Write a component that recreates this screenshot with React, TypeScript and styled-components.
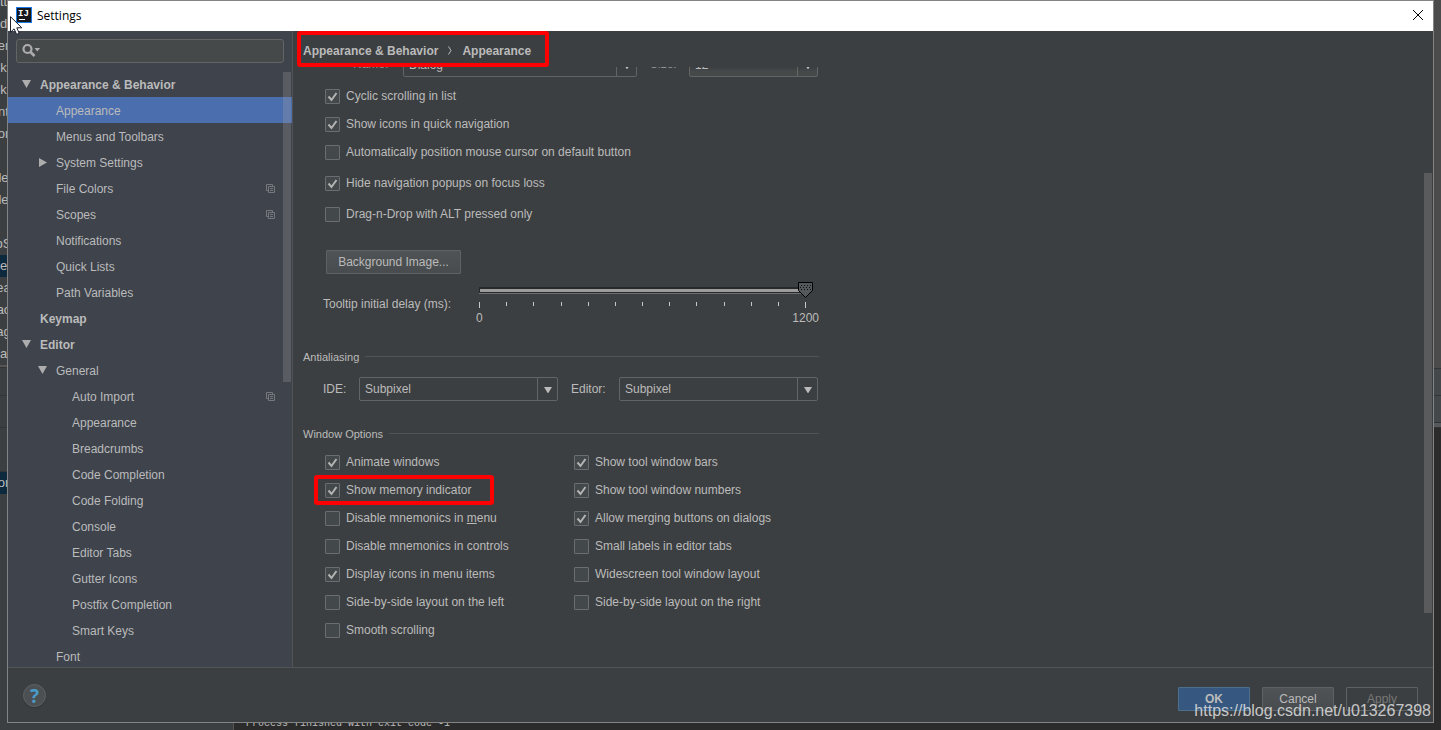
import React, { useId, useState } from "react";
import styled, { createGlobalStyle, css } from "styled-components";

const color = {
  panel: "#3c3f41",
  sidebar: "#3e434c",
  text: "#bbbbbb",
  line: "#515355",
  border: "#646464",
  selection: "#4b6eaf",
  console: "#2b2b2b",
  highlight: "#ff0000",
};

const GlobalStyle = createGlobalStyle`
  * { box-sizing: border-box; }
  body {
    margin: 0;
    background: ${color.panel};
    color: ${color.text};
    font: 12px/16px "Liberation Sans", Arial, sans-serif;
  }
  button, input, select { font: inherit; color: inherit; }
`;

/* ---------- IDE window behind the dialog ---------- */

const Desktop = styled.div`
  position: relative;
  display: grid;
  grid-template: minmax(0, 1fr) 7px / 7px minmax(0, 1fr) 7px;
  height: 100vh;
  overflow: hidden;
`;

const LeftEdge = styled.div`
  overflow: hidden;
  background: ${color.panel};
`;

const EdgeLines = styled.div`
  margin-top: -9px;
`;

const EdgeLine = styled.div<{ $selected?: boolean }>`
  display: flex;
  justify-content: center;
  height: 22px;
  line-height: 22px;
  font-size: 13px;
  white-space: pre;
  background: ${(p) => (p.$selected ? "#0d293e" : "transparent")};
`;

const EdgeBand = styled.div<{ $height: number; $fill?: string }>`
  height: ${(p) => p.$height}px;
  background: ${(p) => p.$fill ?? "transparent"};
  border-bottom: 1px solid #323435;
`;

const RightEdge = styled.div`
  display: flex;
  flex-direction: column;
  background: ${color.console};
`;

const BottomEdge = styled.div`
  grid-column: 1 / -1;
  display: flex;
  overflow: hidden;
`;

const BottomLeft = styled.div`
  width: 234px;
  border-right: 1px solid #555555;
`;

const ConsoleLine = styled.div`
  flex: 1;
  padding-left: 12px;
  margin-top: -5px;
  background: ${color.console};
  font: 10px/12px "Liberation Mono", monospace;
  white-space: pre;
`;

/* ---------- Dialog frame ---------- */

const Dialog = styled.main`
  display: flex;
  flex-direction: column;
  min-width: 0;
  border: 1px solid #848484;
  background: ${color.panel};
`;

const TitleBar = styled.header`
  display: flex;
  align-items: center;
  flex: none;
  gap: 5px;
  height: 30px;
  padding: 0 10px 2px 8px;
  background: #ffffff;
  color: #000000;
`;

const Title = styled.h1`
  flex: 1;
  margin: 0;
  padding-top: 2px;
  font: 12px/16px "Open Sans", "Noto Sans", sans-serif;
`;

const CloseButton = styled.button`
  display: flex;
  padding: 0;
  border: 0;
  background: none;
`;

const Body = styled.div`
  display: flex;
  flex: 1;
  min-height: 0;
`;

const Footer = styled.footer`
  display: flex;
  align-items: center;
  flex: none;
  gap: 12px;
  height: 55px;
  padding: 8px 15px 0;
  border-top: 1px solid ${color.line};
`;

const HelpButton = styled.button`
  width: 23px;
  height: 23px;
  margin: -7px auto 0 0;
  padding: 0;
  border: 1px solid #5f6365;
  border-radius: 50%;
  background: #4c5052;
  box-shadow: 0 1px 1px #353739;
  color: #4a9cc8;
  font: bold 19px/20px "Open Sans", sans-serif;
`;

const Button = styled.button<{ $kind?: "primary" }>`
  height: 24px;
  padding: 0 10px;
  border: 1px solid #5e6264;
  border-radius: 1px;
  background: linear-gradient(#4f5355, #484c4e);
  font-size: 12px;
  &:disabled {
    background: none;
    color: #777777;
  }
  ${(p) =>
    p.$kind === "primary" &&
    css`
      border-color: #4c708c;
      background: #365880;
      font-weight: bold;
    `}
`;

const DialogButton = styled(Button)`
  width: 72px;
`;

/* ---------- Sidebar ---------- */

const Sidebar = styled.nav`
  display: flex;
  flex-direction: column;
  flex: none;
  width: 285px;
  border-right: 1px solid ${color.line};
  background: ${color.sidebar};
`;

const SearchBox = styled.label`
  display: flex;
  align-items: center;
  flex: none;
  height: 24px;
  margin: 8px;
  padding: 0 0 2px 5px;
  border: 1px solid ${color.border};
  border-radius: 3px;
  background: #45494a;
`;

const SearchInput = styled.input`
  flex: 1;
  min-width: 0;
  border: 0;
  outline: 0;
  background: none;
`;

const TreeArea = styled.div`
  position: relative;
  flex: 1;
  min-height: 0;
  overflow: hidden;
`;

const Tree = styled.ul`
  margin: 0;
  padding: 0;
  list-style: none;
`;

const TreeRow = styled.button<{ $level: number; $selected: boolean }>`
  display: flex;
  align-items: center;
  width: 100%;
  height: 26px;
  padding: 2px 17px 0 ${(p) => 14 + p.$level * 16}px;
  border: 0;
  background: ${(p) => (p.$selected ? color.selection : "transparent")};
  font-weight: ${(p) => (p.$level === 0 ? "bold" : "normal")};
  font-size: 12px;
  text-align: left;
`;

const TreeArrow = styled.span`
  display: flex;
  width: 18px;
  margin-top: -2px;
`;

const TreeText = styled.span`
  flex: 1;
`;

const TreeBadge = styled.span`
  display: flex;
  margin-top: -2px;
`;

const TreeThumb = styled.div`
  position: absolute;
  top: 1px;
  right: 1px;
  width: 8px;
  height: 52%;
  background: rgba(160, 160, 160, 0.28);
`;

/* ---------- Settings page ---------- */

const Page = styled.section`
  display: flex;
  flex-direction: column;
  flex: 1;
  min-width: 0;
`;

const Crumbs = styled.h2`
  display: flex;
  align-items: center;
  align-self: flex-start;
  flex: none;
  gap: 10px;
  height: 36px;
  margin: 0 0 0 4px;
  padding: 3px 14px 0 2px;
  border: 4px solid ${color.highlight};
  border-radius: 3px;
  font: bold 12px/16px "Liberation Sans", Arial, sans-serif;
`;

const Scroller = styled.div`
  position: relative;
  flex: 1;
  min-height: 0;
  overflow: hidden;
`;

const PageThumb = styled.div`
  position: absolute;
  top: 106px;
  right: 1px;
  width: 8px;
  height: 440px;
  background: #5a5b5c;
`;

const Form = styled.div`
  width: 526px;
  padding-left: 10px;
`;

const FontRow = styled.div`
  display: flex;
  margin: -14px 1px 5px 50px;
`;

const FieldLabel = styled.label<{ $width: number }>`
  width: ${(p) => p.$width}px;
  line-height: 24px;
`;

const ComboBox = styled.div<{ $width: number; $editable?: boolean }>`
  display: grid;
  grid-template-columns: minmax(0, 1fr) 20px;
  width: ${(p) => p.$width}px;
  height: 24px;
  border: 1px solid ${color.border};
  border-radius: 2px;
  background: ${(p) =>
    p.$editable ? `linear-gradient(${color.panel} 60%, #45494a 80%)` : "transparent"};
`;

const ComboSelect = styled.select`
  grid-area: 1 / 1 / 2 / 3;
  appearance: none;
  margin: 0;
  padding: 0 24px 0 5px;
  border: 0;
  outline: 0;
  background: none;
  font-size: 12px;
`;

const ComboArrow = styled.span`
  grid-area: 1 / 2;
  display: flex;
  align-items: center;
  justify-content: center;
  padding-top: 2px;
  border-left: 1px solid ${color.border};
  pointer-events: none;
`;

const FontLabel = styled(FieldLabel)`
  line-height: 22px;
  color: #909293;
`;

const CheckList = styled.div`
  flex: 1;
  padding-left: 22px;
`;

const CheckRow = styled.div<{ $tall?: boolean }>`
  position: relative;
  display: flex;
  gap: 6px;
  height: ${(p) => (p.$tall ? 31 : 28)}px;
  padding-top: 7px;
`;

const CheckBox = styled.span`
  display: grid;
  width: 15px;
  height: 15px;
`;

const CheckInput = styled.input`
  grid-area: 1 / 1;
  appearance: none;
  width: 15px;
  height: 15px;
  margin: 0;
  border: 1px solid #6b6e70;
  border-radius: 1px;
  background: #43494a;
`;

const CheckMark = styled.svg`
  grid-area: 1 / 1;
  pointer-events: none;
`;

const CheckLabel = styled.label`
  line-height: 15px;
  white-space: nowrap;
`;

const Highlight = styled.span`
  position: absolute;
  top: -1px;
  left: -11px;
  width: 180px;
  height: 30px;
  border: 4px solid ${color.highlight};
  border-radius: 3px;
  pointer-events: none;
`;

const WideButton = styled(Button)`
  display: block;
  width: 135px;
  margin: 19px 0 6px 23px;
`;

const SliderRow = styled.div`
  display: flex;
  padding-left: 20px;
`;

const SliderLabel = styled.label`
  width: 155px;
  padding-top: 16px;
`;

const Slider = styled.div`
  display: grid;
  width: 343px;
`;

const SliderDrawing = styled.svg`
  grid-area: 1 / 1;
`;

const SliderInput = styled.input`
  grid-area: 1 / 1;
  margin: 0;
  opacity: 0;
`;

const SliderScale = styled.div`
  display: flex;
  justify-content: space-between;
  padding-top: 2px;
`;

const SectionTitle = styled.h3`
  display: flex;
  align-items: center;
  gap: 6px;
  margin: 23px 0 0;
  font: 11px/16px "Liberation Sans", Arial, sans-serif;
  &::after {
    content: "";
    flex: 1;
    height: 1px;
    margin-bottom: 2px;
    background: ${color.line};
  }
`;

const ComboRow = styled.div`
  display: flex;
  padding: 12px 0 2px 20px;
`;

const Gap = styled.span`
  width: 13px;
`;

const Columns = styled.div`
  display: flex;
  padding-top: 6px;
`;

const FirstColumn = styled(CheckList)`
  flex: 0 0 249px;
`;

/* ---------- Overlays ---------- */

const Watermark = styled.div`
  position: absolute;
  right: 10px;
  bottom: 9px;
  color: rgba(225, 225, 225, 0.85);
  font: 16px/20px "Liberation Sans", Arial, sans-serif;
  pointer-events: none;
`;

const Pointer = styled.svg`
  position: absolute;
  top: 16px;
  left: 10px;
  pointer-events: none;
`;

/* ---------- Icons ---------- */

const DownArrow = () => (
  <svg width="9" height="8" viewBox="0 0 9 8" aria-hidden="true">
    <path d="M0 0h9L4.5 8z" fill="#adadad" />
  </svg>
);

const SmallArrow = () => (
  <svg width="8" height="6" viewBox="0 0 8 6" aria-hidden="true">
    <path d="M0 0h8L4 6.5z" fill="#bbbbbb" />
  </svg>
);

const RightArrow = () => (
  <svg width="9" height="9" viewBox="0 0 9 9" aria-hidden="true">
    <path d="M1 0l8 4.5L1 9z" fill="#adadad" />
  </svg>
);

const ProjectIcon = () => (
  <svg width="9" height="9" viewBox="0 0 9 9" fill="none" stroke="#75797d" aria-hidden="true">
    <path d="M2 6.5H.5v-6h6V2" />
    <path d="M2.5 2.5h6v6h-6zM4 4.5h3M4 6.5h3" />
  </svg>
);

const SearchIcon = () => (
  <svg width="19" height="15" viewBox="0 0 19 15" aria-hidden="true">
    <circle cx="5.5" cy="6" r="4" fill="none" stroke="#adadad" strokeWidth="2.2" />
    <path d="M8.5 9l4 4" stroke="#adadad" strokeWidth="2.6" />
    <path d="M12.5 5h5.6l-2.8 3.6z" fill="#adadad" />
  </svg>
);

const AppIcon = () => (
  <svg width="16" height="16" viewBox="0 0 16 16" aria-hidden="true">
    <rect width="16" height="16" fill="#1a7be8" />
    <rect x="1" y="1" width="14" height="14" fill="#16181c" />
    <text x="2" y="9" fill="#fff" fontFamily="Liberation Mono" fontWeight="bold" fontSize="9">
      IJ
    </text>
    <path d="M3 12.5h6" stroke="#fff" />
  </svg>
);

const CloseIcon = () => (
  <svg width="10" height="10" viewBox="0 0 10 10" stroke="#000" aria-hidden="true">
    <path d="M0 0l10 10M10 0L0 10" />
  </svg>
);

const CrumbIcon = () => (
  <svg width="4" height="9" viewBox="0 0 4 9" fill="none" stroke="#bbbbbb" aria-hidden="true">
    <path d="M.5 .5l2.5 4-2.5 4" />
  </svg>
);

/* ---------- Parts ---------- */

type Node = {
  text: string;
  level: number;
  arrow?: "down" | "right";
  project?: boolean;
};

const nodes: Node[] = [
  { text: "Appearance & Behavior", level: 0, arrow: "down" },
  { text: "Appearance", level: 1 },
  { text: "Menus and Toolbars", level: 1 },
  { text: "System Settings", level: 1, arrow: "right" },
  { text: "File Colors", level: 1, project: true },
  { text: "Scopes", level: 1, project: true },
  { text: "Notifications", level: 1 },
  { text: "Quick Lists", level: 1 },
  { text: "Path Variables", level: 1 },
  { text: "Keymap", level: 0 },
  { text: "Editor", level: 0, arrow: "down" },
  { text: "General", level: 1, arrow: "down" },
  { text: "Auto Import", level: 2, project: true },
  { text: "Appearance", level: 2 },
  { text: "Breadcrumbs", level: 2 },
  { text: "Code Completion", level: 2 },
  { text: "Code Folding", level: 2 },
  { text: "Console", level: 2 },
  { text: "Editor Tabs", level: 2 },
  { text: "Gutter Icons", level: 2 },
  { text: "Postfix Completion", level: 2 },
  { text: "Smart Keys", level: 2 },
  { text: "Font", level: 1 },
];

type CheckProps = {
  label: React.ReactNode;
  on?: boolean;
  tall?: boolean;
  marked?: boolean;
};

function Check({ label, on = false, tall, marked }: CheckProps) {
  const id = useId();
  const [checked, setChecked] = useState(on);
  return (
    <CheckRow $tall={tall}>
      <CheckBox>
        <CheckInput
          type="checkbox"
          id={id}
          checked={checked}
          onChange={(e) => setChecked(e.target.checked)}
        />
        {checked && (
          <CheckMark width="15" height="15" viewBox="0 0 15 15" fill="none" aria-hidden="true">
            <path d="M3.5 7.5l3 3.5 5-7" stroke="#b4b4b4" strokeWidth="2" />
          </CheckMark>
        )}
      </CheckBox>
      <CheckLabel htmlFor={id}>{label}</CheckLabel>
      {marked && <Highlight />}
    </CheckRow>
  );
}

type ComboProps = { id: string; value: string; width: number; editable?: boolean };

function Combo({ id, value, width, editable }: ComboProps) {
  return (
    <ComboBox $width={width} $editable={editable}>
      <ComboSelect id={id} defaultValue={value}>
        <option>{value}</option>
      </ComboSelect>
      <ComboArrow>
        <SmallArrow />
      </ComboArrow>
    </ComboBox>
  );
}

function DelaySlider() {
  const [value, setValue] = useState(1200);
  const x = 3 + (value / 1200) * 326;
  const ticks = Array.from({ length: 13 }, (_, i) => Math.round((i * 326) / 12) + 3);
  return (
    <div>
      <Slider>
        <SliderDrawing width="343" height="28" viewBox="0 0 343 28" aria-hidden="true">
          <rect x="3" y="7" width="328" height="6" fill="#26282a" />
          <rect x="4" y="9" width="326" height="3" fill="#9c9c9c" />
          <rect x="3" y="13" width="328" height="1" fill="#6e7072" />
          {ticks.map((t, i) => (
            <rect key={t} x={t} y="22" width="1" height={i % 12 ? 4 : 6} fill="#c8c8c8" />
          ))}
          <g transform={`translate(${x - 7} 2)`}>
            <path d="M.5 .5h14v8l-7 7-7-7z" fill="#55585a" stroke="#000" />
            <path
              d="M3 3.5h10M2 5.5h11M3 7.5h10"
              stroke="#101010"
              strokeDasharray="1 2"
            />
          </g>
        </SliderDrawing>
        <SliderInput
          type="range"
          id="delay"
          min={0}
          max={1200}
          value={value}
          onChange={(e) => setValue(Number(e.target.value))}
        />
      </Slider>
      <SliderScale>
        <span>0</span>
        <span>1200</span>
      </SliderScale>
    </div>
  );
}

const edgeText = [
  "tt", "d", "er", "k", "k", "nt", "or", "", "le", "le", "", "pS", "e", "ea", "ac", "ag", "a",
];

export default function App() {
  const [selected, setSelected] = useState(1);
  return (
    <Desktop>
      <GlobalStyle />
      <LeftEdge aria-hidden="true">
        <EdgeLines>
          {edgeText.map((t, i) => (
            <EdgeLine key={i} $selected={i === 12}>
              {t}
            </EdgeLine>
          ))}
          <EdgeBand $height={3} $fill="#555555" />
          <EdgeBand $height={28} />
          <EdgeBand $height={32} />
          <EdgeBand $height={44} />
          <EdgeLine $selected>or</EdgeLine>
        </EdgeLines>
      </LeftEdge>

      <Dialog>
        <TitleBar>
          <AppIcon />
          <Title>Settings</Title>
          <CloseButton aria-label="Close">
            <CloseIcon />
          </CloseButton>
        </TitleBar>

        <Body>
          <Sidebar>
            <SearchBox>
              <SearchIcon />
              <SearchInput type="text" aria-label="Search settings" />
            </SearchBox>
            <TreeArea>
              <Tree>
                {nodes.map((n, i) => (
                  <li key={i}>
                    <TreeRow
                      $level={n.level}
                      $selected={i === selected}
                      onClick={() => setSelected(i)}
                    >
                      <TreeArrow>
                        {n.arrow === "down" && <DownArrow />}
                        {n.arrow === "right" && <RightArrow />}
                      </TreeArrow>
                      <TreeText>{n.text}</TreeText>
                      {n.project && (
                        <TreeBadge>
                          <ProjectIcon />
                        </TreeBadge>
                      )}
                    </TreeRow>
                  </li>
                ))}
              </Tree>
              <TreeThumb />
            </TreeArea>
          </Sidebar>

          <Page>
            <Crumbs>
              <span>Appearance &amp; Behavior</span>
              <CrumbIcon />
              <span>Appearance</span>
            </Crumbs>
            <Scroller>
              <Form>
                <FontRow>
                  <FontLabel $width={50} htmlFor="font-name">Name:</FontLabel>
                  <Combo id="font-name" value="Dialog" width={234} />
                  <Gap />
                  <FontLabel $width={39} htmlFor="font-size">Size:</FontLabel>
                  <Combo id="font-size" value="12" width={129} editable />
                </FontRow>
                <CheckList>
                  <Check label="Cyclic scrolling in list" on />
                  <Check label="Show icons in quick navigation" on />
                  <Check label="Automatically position mouse cursor on default button" tall />
                  <Check label="Hide navigation popups on focus loss" on tall />
                  <Check label="Drag-n-Drop with ALT pressed only" tall />
                </CheckList>
                <WideButton>Background Image...</WideButton>
                <SliderRow>
                  <SliderLabel htmlFor="delay">Tooltip initial delay (ms):</SliderLabel>
                  <DelaySlider />
                </SliderRow>

                <SectionTitle>Antialiasing</SectionTitle>
                <ComboRow>
                  <FieldLabel $width={36} htmlFor="aa-ide">IDE:</FieldLabel>
                  <Combo id="aa-ide" value="Subpixel" width={199} />
                  <Gap />
                  <FieldLabel $width={48} htmlFor="aa-editor">Editor:</FieldLabel>
                  <Combo id="aa-editor" value="Subpixel" width={199} />
                </ComboRow>

                <SectionTitle>Window Options</SectionTitle>
                <Columns>
                  <FirstColumn>
                    <Check label="Animate windows" on />
                    <Check label="Show memory indicator" on marked />
                    <Check label={<>Disable mnemonics in <u>m</u>enu</>} />
                    <Check label="Disable mnemonics in controls" />
                    <Check label="Display icons in menu items" on />
                    <Check label="Side-by-side layout on the left" />
                    <Check label="Smooth scrolling" />
                  </FirstColumn>
                  <CheckList>
                    <Check label="Show tool window bars" on />
                    <Check label="Show tool window numbers" on />
                    <Check label="Allow merging buttons on dialogs" on />
                    <Check label="Small labels in editor tabs" />
                    <Check label="Widescreen tool window layout" />
                    <Check label="Side-by-side layout on the right" />
                  </CheckList>
                </Columns>
              </Form>
              <PageThumb />
            </Scroller>
          </Page>
        </Body>

        <Footer>
          <HelpButton aria-label="Help">?</HelpButton>
          <DialogButton $kind="primary">OK</DialogButton>
          <DialogButton>Cancel</DialogButton>
          <DialogButton disabled>Apply</DialogButton>
        </Footer>
      </Dialog>

      <RightEdge aria-hidden="true">
        <EdgeBand $height={369} $fill="#4b4b4b" />
        <EdgeBand $height={27} $fill="#45484a" />
        <EdgeBand $height={27} $fill="#45484a" />
        <EdgeBand $height={5} $fill="#55595b" />
      </RightEdge>

      <BottomEdge aria-hidden="true">
        <BottomLeft />
        <ConsoleLine>Process finished with exit code -1</ConsoleLine>
      </BottomEdge>

      <Watermark>https://blog.csdn.net/u013267398</Watermark>
      <Pointer width="13" height="20" viewBox="0 0 13 20" aria-hidden="true">
        <path
          d="M.5 .7v15.6l3.6-3.5 2.5 5.6 2.6-1.1-2.4-5.5h5z"
          fill="#fff"
          stroke="#1a1f2b"
        />
      </Pointer>
    </Desktop>
  );
}
